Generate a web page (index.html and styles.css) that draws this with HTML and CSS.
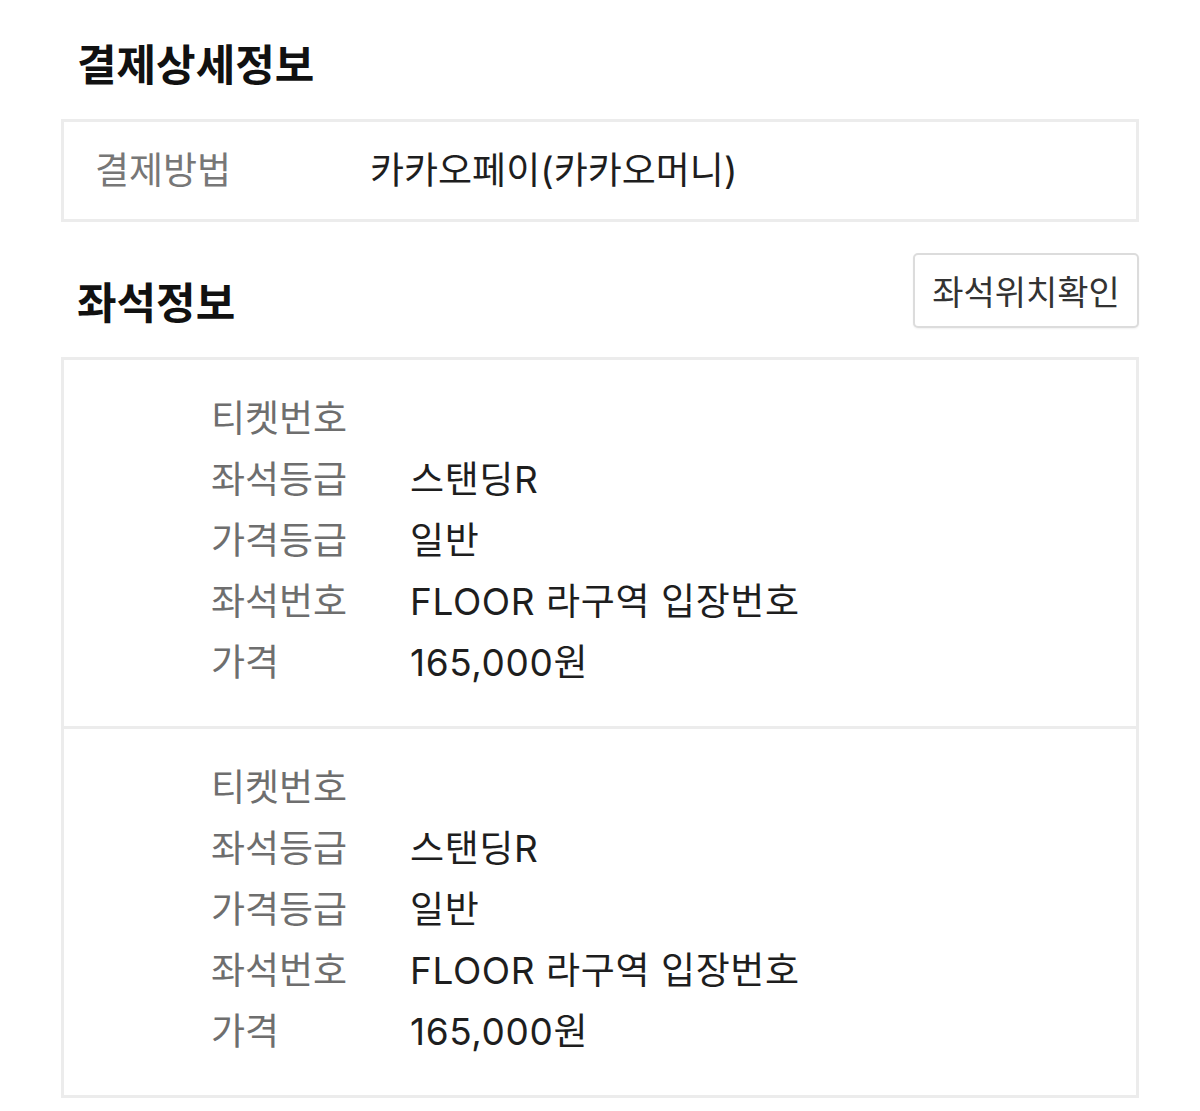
FILE: index.html
```html
<!DOCTYPE html>
<html lang="ko">
<head>
  <meta charset="UTF-8">
  <meta name="viewport" content="width=device-width, initial-scale=1.0">
  <title>결제상세정보</title>
  <link rel="stylesheet" href="styles.css">
</head>
<body>
  <div class="page">
    <h2 class="title">결제상세정보</h2>
    <div class="box pay">
      <span class="pay-label">결제방법</span>
      <span class="pay-value">카카오페이(카카오머니)</span>
    </div>

    <div class="seat-head">
      <h2 class="title">좌석정보</h2>
      <button class="seat-btn">좌석위치확인</button>
    </div>

    <div class="box seats">
      <div class="ticket">
        <div class="row"><span class="label">티켓번호</span><span class="value"></span></div>
        <div class="row"><span class="label">좌석등급</span><span class="value">스탠딩R</span></div>
        <div class="row"><span class="label">가격등급</span><span class="value">일반</span></div>
        <div class="row"><span class="label">좌석번호</span><span class="value">FLOOR 라구역 입장번호</span></div>
        <div class="row"><span class="label">가격</span><span class="value">165,000원</span></div>
      </div>
      <div class="ticket">
        <div class="row"><span class="label">티켓번호</span><span class="value"></span></div>
        <div class="row"><span class="label">좌석등급</span><span class="value">스탠딩R</span></div>
        <div class="row"><span class="label">가격등급</span><span class="value">일반</span></div>
        <div class="row"><span class="label">좌석번호</span><span class="value">FLOOR 라구역 입장번호</span></div>
        <div class="row"><span class="label">가격</span><span class="value">165,000원</span></div>
      </div>
    </div>
  </div>
</body>
</html>
```
FILE: styles.css
```css
body {
  margin: 0;
  background: #fff;
  font-family: Inter, "Noto Sans CJK KR", sans-serif;
  color: #222;
}
.page {
  width: 1078px;
  padding: 39px 0 0 61px;
}
.title {
  margin: 0;
  padding-left: 16px;
  font-size: 43px;
  font-weight: 700;
  line-height: 52px;
  color: #111;
}
.box {
  border: 3px solid #ececec;
}
.pay {
  margin-top: 28px;
  height: 97px;
  display: flex;
  align-items: center;
  font-size: 37px;
}
.pay-label {
  width: 275px;
  padding-left: 31px;
  margin-top: -6px;
  color: #777;
}
.pay-value {
  margin-top: -6px;
  color: #1e1e1e;
}
.seat-head {
  margin-top: 31px;
  display: flex;
  justify-content: space-between;
  align-items: flex-start;
}
.seat-head .title {
  margin-top: 24px;
}
.seat-btn {
  width: 226px;
  height: 75px;
  background: #fff;
  border: 2px solid #dcdcdc;
  border-radius: 5px;
  font-family: inherit;
  font-size: 34px;
  color: #333;
  padding: 0;
  box-shadow: 0 1px 2px rgba(0, 0, 0, 0.06);
}
.seats {
  margin-top: 28px;
}
.ticket {
  padding: 25px 0 36px 147px;
}
.ticket + .ticket {
  border-top: 3px solid #ececec;
}
.row {
  display: flex;
  height: 61px;
  align-items: center;
  font-size: 37px;
}
.label {
  width: 199px;
  color: #6e6e6e;
}
.value {
  color: #1e1e1e;
  letter-spacing: 0.6px;
}
```
